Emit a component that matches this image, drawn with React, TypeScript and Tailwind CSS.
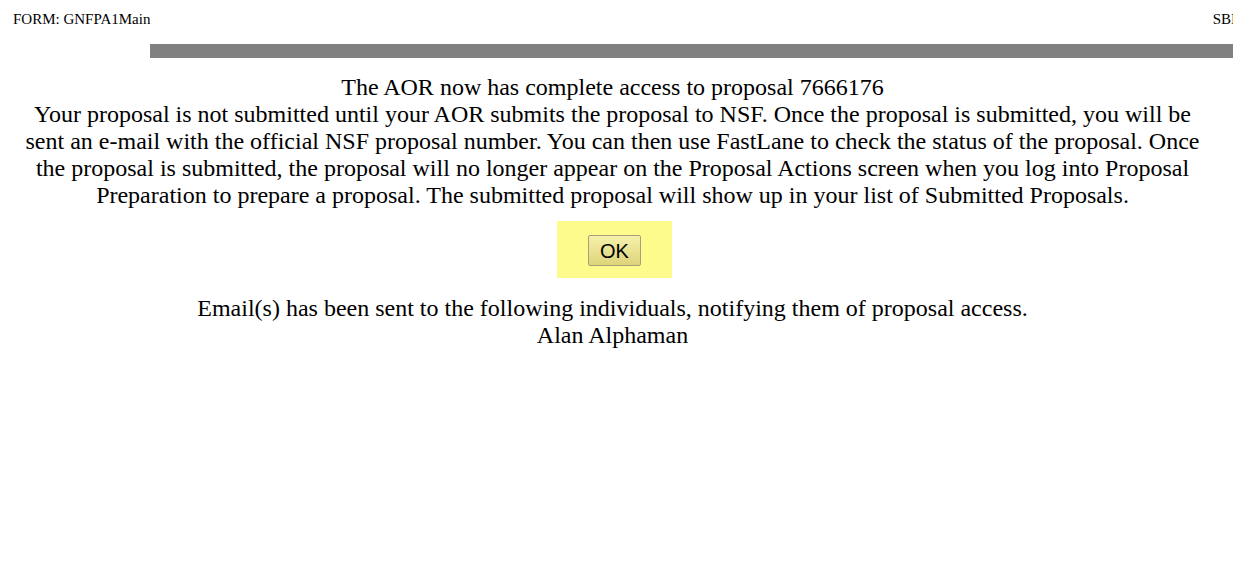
export default function App() {
  return (
    <div className="w-[1233px] h-[561px] overflow-hidden bg-white text-black font-['Liberation_Serif','Times_New_Roman',serif]">
      <div className="w-[1260px]">
        <div className="flex justify-between items-start pt-[11px] text-[15px] leading-[17px] font-['Liberation_Serif',serif]">
          <span className="pl-[13px]">FORM: GNFPA1Main</span>
          <span className="pr-[14px]">SBIR</span>
        </div>
        <div className="ml-[150px] mt-[16px] h-[14px] bg-[#808080]" />
      </div>
      <div className="w-[1225px]">
        <div className="mt-[16px] text-center text-[24px] leading-[27px] font-['Liberation_Serif',serif]">
          <div>The AOR now has complete access to proposal 7666176</div>
          <div>
            Your proposal is not submitted until your AOR submits the proposal to NSF. Once the proposal is submitted, you will be
            <br />
            sent an e-mail with the official NSF proposal number. You can then use FastLane to check the status of the proposal. Once
            <br />
            the proposal is submitted, the proposal will no longer appear on the Proposal Actions screen when you log into Proposal
            <br />
            Preparation to prepare a proposal. The submitted proposal will show up in your list of Submitted Proposals.
          </div>
        </div>
        <div className="flex justify-center mt-[12px] pl-[4px]">
          <div className="w-[115px] h-[57px] bg-[#fdfb8c] flex items-center justify-center">
            <button className="w-[53px] h-[31px] mt-[2px] border border-[#a8a07a] rounded-[2px] bg-gradient-to-b from-[#f5f1aa] to-[#ddd47a] text-[20px] leading-none text-black font-['Liberation_Sans',Arial,sans-serif]">
              OK
            </button>
          </div>
        </div>
        <div className="mt-[17px] text-center text-[24px] leading-[27px] font-['Liberation_Serif',serif]">
          <div>Email(s) has been sent to the following individuals, notifying them of proposal access.</div>
          <div>Alan Alphaman</div>
        </div>
      </div>
    </div>
  );
}
